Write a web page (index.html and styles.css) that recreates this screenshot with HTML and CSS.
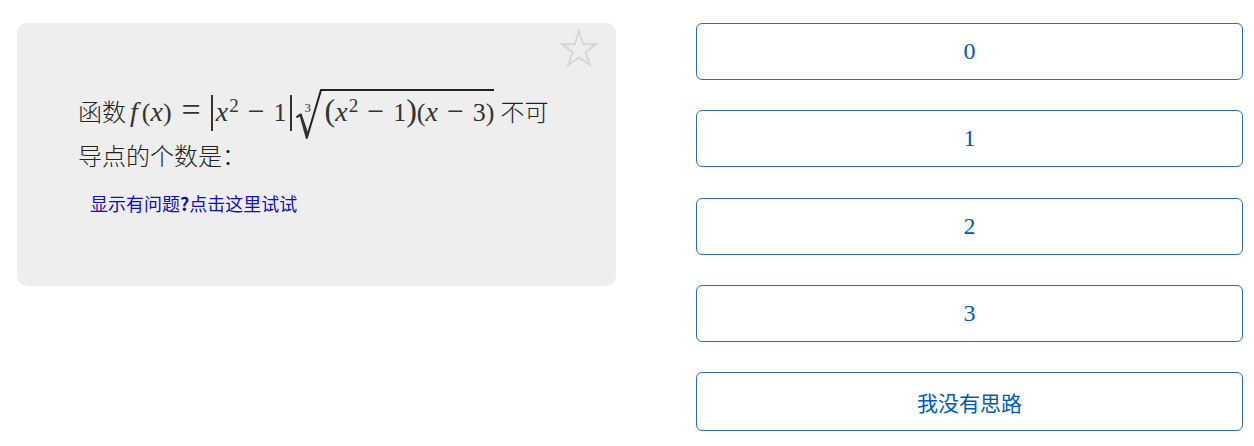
FILE: index.html
```html
<!DOCTYPE html>
<html lang="zh-CN">
<head>
<meta charset="utf-8">
<meta name="viewport" content="width=device-width, initial-scale=1">
<title>函数不可导点</title>
<link rel="stylesheet" href="styles.css">
</head>
<body>
<main class="quiz">
  <section class="card">
    <button class="star" type="button" aria-label="收藏">
      <svg viewBox="0 0 38 38" width="38" height="38" aria-hidden="true"><path d="M19 2 L23.2 15.3 H36 L25.5 23.2 L29.8 36 L19 28.5 L8.2 36 L12.5 23.2 L2 15.3 H14.8 Z"/></svg>
    </button>
    <p class="question">函数<span class="math"><i class="fn">f</i><span>(</span><i>x</i><span>)</span><span class="rel">=</span><span class="abs"><i>x</i><sup>2</sup><span class="op">−</span><span>1</span></span><span class="root"><span class="hook"><span class="index">3</span><svg viewBox="0 0 26 50" width="26" height="50" aria-hidden="true"><path class="thin" d="M0.5 28.5 L5 25 M10.8 49 L25 1 H26"/><path class="fill" d="M3.4 26.2 L5.6 24.6 L12 43.5 L11.2 50 H10 Z"/></svg></span><span class="radicand"><span class="big">(</span><i>x</i><sup>2</sup><span class="op">−</span><span>1</span><span class="big">)</span><span>(</span><i>x</i><span class="op">−</span><span>3</span><span>)</span></span></span></span>不可导点的个数是：</p>
    <a class="help" href="#help">显示有问题<b>?</b>点击这里试试</a>
  </section>
  <section class="answers" aria-label="选项">
    <button class="answer" type="button">0</button>
    <button class="answer" type="button">1</button>
    <button class="answer" type="button">2</button>
    <button class="answer" type="button">3</button>
    <button class="answer unsure" type="button">我没有思路</button>
  </section>
</main>
</body>
</html>
```
FILE: styles.css
```css
* {
  box-sizing: border-box;
}

body {
  margin: 0;
  background: #fff;
  font-family: "Noto Sans CJK SC", sans-serif;
}

.quiz {
  display: grid;
  grid-template-columns: 599fr 547fr;
  gap: 80px;
  align-items: start;
  padding: 23px 11px 15px 17px;
}

.card {
  position: relative;
  min-height: 263px;
  padding: 66px 60px 52px 61px;
  border-radius: 10px;
  background: #eee;
}

.star {
  position: absolute;
  top: 6px;
  right: 18px;
  display: flex;
  padding: 0;
  border: 0;
  background: none;
  cursor: pointer;
}

.star path {
  fill: none;
  stroke: #d6d6d6;
  stroke-width: 2;
}

.question {
  margin: 0;
  color: #222;
  font-size: 24px;
  font-weight: 300;
  line-height: 44px;
}

.math {
  display: inline-flex;
  align-items: baseline;
  margin: 0 6px 0 4px;
  color: #333;
  font-family: "Liberation Serif", "Noto Sans CJK SC", serif;
  font-size: 26px;
  font-weight: 400;
  line-height: 32px;
  white-space: nowrap;
}

.math i {
  font-size: 28px;
}

.math .fn {
  padding-right: 4px;
}

.math sup {
  position: relative;
  bottom: 9px;
  padding-left: 1px;
  font-size: 19px;
  line-height: 1;
  vertical-align: baseline;
}

.rel {
  margin: 0 10px;
  font-size: 34px;
  line-height: 24px;
}

.op {
  margin: 0 9px;
  font-size: 30px;
}

.abs {
  display: inline-flex;
  align-items: baseline;
  padding: 0 3px 2px;
  border: solid #333;
  border-width: 0 2px;
}

.root {
  display: inline-flex;
  align-items: baseline;
  margin-left: 4px;
}

.hook {
  position: relative;
  align-self: flex-start;
  width: 26px;
  height: 42px;
}

.hook svg {
  display: block;
}

.index {
  position: absolute;
  top: 11px;
  left: 9px;
  font-size: 13px;
  line-height: 16px;
}

.thin {
  fill: none;
  stroke: #222;
  stroke-width: 2;
}

.fill {
  fill: #333;
}

.radicand {
  display: inline-flex;
  align-items: baseline;
  padding: 3px 0 0 3px;
  border-top: 2px solid #222;
}

.big {
  font-size: 32px;
}

.help {
  display: inline-block;
  margin: 12px 0 0 12px;
  color: #1010b8;
  font-size: 18px;
  line-height: 28px;
  text-decoration: none;
}

.answers {
  display: grid;
  align-content: space-between;
  min-height: 408px;
}

.answer {
  min-height: 57px;
  padding: 8px 16px;
  border: 1px solid #2a70ac;
  border-radius: 6px;
  background: #fff;
  color: #005bac;
  font-family: "Liberation Serif", "Noto Sans CJK SC", serif;
  font-size: 24px;
  cursor: pointer;
}

.unsure {
  min-height: 59px;
  font-family: "Noto Sans CJK SC", sans-serif;
  font-size: 21px;
}
```
